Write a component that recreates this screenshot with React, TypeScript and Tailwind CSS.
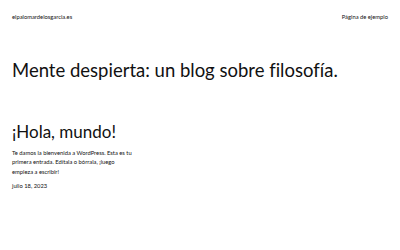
export default function App() {
  return (
    <div className="min-h-[250px] w-[400px] bg-white text-[#111] font-['Lato',sans-serif] [font-variant-ligatures:none]">
      {/* cabecera */}
      <header className="flex items-center justify-between pl-[12px] pr-[12px] pt-[13px] text-[5.8px] leading-[8px]">
        <span>elpalomardelosgarcia.es</span>
        <span>Página de ejemplo</span>
      </header>

      {/* título del sitio */}
      <h1 className="mt-[36px] px-[12px] text-[18.5px] leading-[26px] font-normal">
        Mente despierta: un blog sobre filosofía.
      </h1>

      {/* entrada */}
      <article className="mt-[38px] px-[12px]">
        <h2 className="text-[17px] leading-[22px] font-normal">¡Hola, mundo!</h2>
        <p className="mt-[4.5px] w-[122px] text-[5.8px] leading-[9.5px]">
          Te damos la bienvenida a WordPress. Esta es tu primera entrada. Edítala o bórrala, ¡luego empieza a escribir!
        </p>
        <p className="mt-[5.5px] text-[5.8px] leading-[8px]">julio 18, 2023</p>
      </article>
    </div>
  );
}
